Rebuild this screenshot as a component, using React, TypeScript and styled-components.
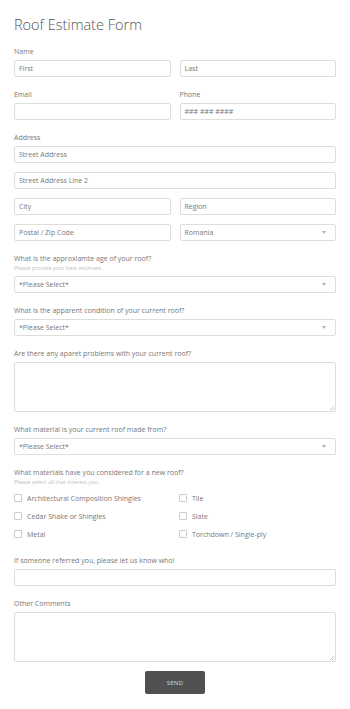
import React from "react";
import styled, { createGlobalStyle } from "styled-components";

const Global = createGlobalStyle`
  html, body { margin: 0; padding: 0; background: #fff; }
  body { font-family: "Open Sans", "Liberation Sans", sans-serif; color: #555; }
  * { box-sizing: border-box; }
`;

const Page = styled.form`
  width: 350px;
  padding: 14px 14px 14px 14px;
  display: flex;
  flex-direction: column;
`;

const Title = styled.h1`
  margin: 1px 0 12px 0;
  font-size: 14.5px;
  line-height: 20px;
  font-weight: 300;
  color: #555;
`;

const Field = styled.div`
  display: flex;
  flex-direction: column;
  margin-bottom: 13px;
`;

const Label = styled.div`
  font-size: 7px;
  line-height: 10px;
  color: #777;
  margin-bottom: 3px;
`;

const Helper = styled.div`
  font-size: 5.5px;
  line-height: 9px;
  color: #c0c0c0;
  margin-top: -3px;
  margin-bottom: 3px;
`;

const Row = styled.div`
  display: grid;
  grid-template-columns: 1fr 1fr;
  column-gap: 9px;
`;

const Stack = styled.div`
  display: flex;
  flex-direction: column;
  gap: 9px;
`;

const Input = styled.div`
  height: 17px;
  border: 1px solid #ddd;
  border-radius: 2px;
  padding: 0 4px;
  display: flex;
  align-items: center;
  font-size: 7px;
  color: #777;
  background: #fff;
`;

const SelectBox = styled(Input)`
  justify-content: space-between;
  padding-right: 9px;
`;

const Caret = styled.span`
  width: 0;
  height: 0;
  border-left: 2.5px solid transparent;
  border-right: 2.5px solid transparent;
  border-top: 3px solid #b0b0b0;
`;

const TextArea = styled.div<{ $h: number }>`
  height: ${(p) => p.$h}px;
  border: 1px solid #ddd;
  border-radius: 2px;
  position: relative;
`;

const Grip = styled.svg`
  position: absolute;
  right: 1px;
  bottom: 1px;
`;

const Checks = styled.div`
  display: grid;
  grid-template-columns: 165px 1fr;
  margin-top: -1px;
`;

const Check = styled.label`
  height: 18px;
  display: flex;
  align-items: center;
  gap: 5px;
  font-size: 7px;
  color: #777;
`;

const Box = styled.span`
  width: 8px;
  height: 8px;
  border: 1px solid #ccc;
  border-radius: 1px;
  background: #fff;
`;

const Send = styled.button`
  align-self: center;
  margin-top: -4px;
  width: 60px;
  height: 23px;
  border: none;
  border-radius: 2px;
  background: #505050;
  color: #ddd;
  font-family: "Open Sans", "Liberation Sans", sans-serif;
  font-size: 6px;
  letter-spacing: 0.3px;
`;

const Resize = () => (
  <Grip width="5" height="5" viewBox="0 0 5 5">
    <path d="M1 5 L5 1 M3 5 L5 3" stroke="#aaa" strokeWidth="0.6" />
  </Grip>
);

const Select = ({ text }: { text: string }) => (
  <SelectBox>
    <span>{text}</span>
    <Caret />
  </SelectBox>
);

export default function App() {
  const left = ["Architectural Composition Shingles", "Cedar Shake or Shingles", "Metal"];
  const right = ["Tile", "Slate", "Torchdown / Single-ply"];
  return (
    <>
      <Global />
      <Page>
        <Title>Roof Estimate Form</Title>
        <Field>
          <Label>Name</Label>
          <Row>
            <Input>First</Input>
            <Input>Last</Input>
          </Row>
        </Field>
        <Field>
          <Row>
            <div>
              <Label>Email</Label>
              <Input />
            </div>
            <div>
              <Label>Phone</Label>
              <Input>### ### ####</Input>
            </div>
          </Row>
        </Field>
        <Field>
          <Label>Address</Label>
          <Stack>
            <Input>Street Address</Input>
            <Input>Street Address Line 2</Input>
            <Row>
              <Input>City</Input>
              <Input>Region</Input>
            </Row>
            <Row>
              <Input>Postal / Zip Code</Input>
              <Select text="Romania" />
            </Row>
          </Stack>
        </Field>
        <Field>
          <Label>What is the approxiamte age of your roof?</Label>
          <Helper>Please provide your best estimate.</Helper>
          <Select text="*Please Select*" />
        </Field>
        <Field>
          <Label>What is the apparent condition of your current roof?</Label>
          <Select text="*Please Select*" />
        </Field>
        <Field>
          <Label>Are there any aparet problems with your current roof?</Label>
          <TextArea $h={50}>
            <Resize />
          </TextArea>
        </Field>
        <Field>
          <Label>What material is your current roof made from?</Label>
          <Select text="*Please Select*" />
        </Field>
        <Field>
          <Label>What materials have you considered for a new roof?</Label>
          <Helper>Please select all that interest you.</Helper>
          <Checks>
            {left.map((l, i) => (
              <React.Fragment key={l}>
                <Check>
                  <Box />
                  {l}
                </Check>
                <Check>
                  <Box />
                  {right[i]}
                </Check>
              </React.Fragment>
            ))}
          </Checks>
        </Field>
        <Field>
          <Label>If someone referred you, please let us know who!</Label>
          <Input />
        </Field>
        <Field>
          <Label>Other Comments</Label>
          <TextArea $h={50}>
            <Resize />
          </TextArea>
        </Field>
        <Send type="button">SEND</Send>
      </Page>
    </>
  );
}
